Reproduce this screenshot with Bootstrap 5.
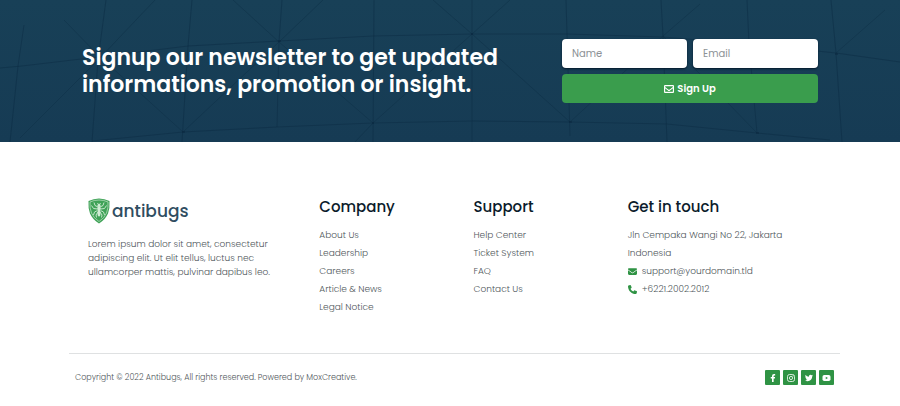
<!DOCTYPE html>
<html lang="en">
<head>
<meta charset="utf-8">
<meta name="viewport" content="width=device-width, initial-scale=1">
<title>Antibugs</title>
<link href="https://cdn.jsdelivr.net/npm/bootstrap@5.3.0/dist/css/bootstrap.min.css" rel="stylesheet">
<style>
  body { font-family: Poppins, Inter, "Open Sans", sans-serif; font-size: 9px; font-weight: 300; line-height: 14px; color: #4f575b; background: #fff; }
  .newsletter { background: linear-gradient(#184057, #163b54); padding: 39px 82px; }
  .web-lines { position: absolute; inset: 0; width: 100%; height: 100%; fill: none; stroke: #0c2c44; stroke-opacity: .5; }
  .signup-title { font-size: 22px; line-height: 27px; font-weight: 600; }
  .signup-form { flex: 0 0 256px; gap: 6px; }
  .signup-fields { gap: 6px; }
  .signup-form .form-control { height: 29px; padding: 0 10px; border: 0; border-radius: 4px; font-size: 10px; box-shadow: 0 1px 2px #04182a; }
  .signup-form .form-control::placeholder { color: #8d9296; }
  .btn-signup { height: 29px; padding: 0; border: 0; border-radius: 4px; font-size: 10px; font-weight: 600; gap: 3px; --bs-btn-color: #fff; --bs-btn-bg: #3a9d4d; --bs-btn-hover-color: #fff; --bs-btn-hover-bg: #2f8641; }
  .site-footer { padding: 56px 60px 0 69px; }
  .part-wide { flex: 0 0 30%; padding: 0 19px; }
  .part-slim { flex: 0 0 20%; padding: 0 0 0 19px; }
  .about-text { margin: 13px 0 0; }
  .footer-title { font-size: 15px; line-height: 18px; font-weight: 500; color: #0b1b2b; margin-bottom: 10px; }
  .line-list { line-height: 18px; }
  .line-list a, .brand { color: inherit; text-decoration: none; }
  .contact-link { gap: 5px; }
  .brand { gap: 2px; font-size: 17px; line-height: 26px; font-weight: 500; color: #2f4d61; }
  .green { fill: #2f9344; }
  .legal { margin-top: 37px; padding: 16px 6px; border-top: 1px solid #dfe1e2; font-size: 8px; line-height: 15px; }
  .social { gap: 3px; }
  .social a { width: 15px; height: 15px; border-radius: 1px; background: #2f9344; }
</style>
</head>
<body>
<section class="newsletter position-relative overflow-hidden text-white">
  <svg class="web-lines" viewBox="0 0 900 142" preserveAspectRatio="none" aria-hidden="true">
    <path d="M0 68 22 66 98 57 188 46 279 41 373 36 472 34 567 34 663 37 749 44 836 53 900 62M92 141 183 132 277 127 373 123 472 121 570 122 667 124 757 133 830 140"/>
    <path d="M24 25 18 66 10 142M106 0 98 60 92 142M192 0 188 46 182 142M282 0 279 42 277 127M374 0 373 142M472 0V142M566 0 567 34 570 136M661 0 663 36 667 142M747 0 749 44 757 133M831 0 836 53 842 142"/>
    <path stroke-opacity=".4" d="M20 138 98 60 155 0M64 20 98 55 183 132 279 42 323 0M233 0 279 42 373 123 472 34 510 0M355 142 373 123M433 0 472 34 570 122 663 36 700 4M663 36 757 133M836 53 885 10"/>
    <path stroke="#0a2740" stroke-width="2" d="M278 41h3M182 132h3M372 123h2M471 34h2M569 122h3M835 54h3M756 133h3"/>
  </svg>
  <div class="position-relative d-flex align-items-center justify-content-between">
    <h2 class="signup-title mb-0">Signup our newsletter to get updated<br>informations, promotion or insight.</h2>
    <form class="signup-form d-flex flex-column">
      <div class="d-flex signup-fields">
        <input class="form-control" type="text" placeholder="Name" aria-label="Name">
        <input class="form-control" type="email" placeholder="Email" aria-label="Email">
      </div>
      <button class="btn btn-signup d-flex align-items-center justify-content-center" type="submit">
        <svg width="10" height="10" viewBox="0 0 512 512" fill="none" stroke="currentColor" stroke-width="60" stroke-linejoin="round" aria-hidden="true"><rect x="30" y="80" width="452" height="352" rx="24"/><path d="M34 172 220 315Q256 340 292 315L478 172"/></svg>
        Sign Up
      </button>
    </form>
  </div>
</section>

<footer class="site-footer">
  <div class="d-flex">
    <div class="part-wide">
      <a class="brand d-flex align-items-center" href="#">
        <svg width="22" height="26" viewBox="0 0 44 52" aria-hidden="true">
          <path fill="#3fa257" d="M22 1Q33 1 43 6Q44 20 40 31Q35 43 22 51Q9 43 4 31Q0 20 1 6Q11 1 22 1Z"/>
          <path fill="none" stroke="#b9dfc0" stroke-width="1.5" d="M22 4Q32 4 40 8Q41 20 37 30Q33 40 22 47Q11 40 7 30Q3 20 4 8Q12 4 22 4Z"/>
          <g fill="none" stroke="#c4e5ca" stroke-width="2"><path d="M20 18 14 15 12 9M24 18 30 15 32 9M19 22 11 21 7 15M25 22 33 21 37 15M19 25 13 28 11 34M25 25 31 28 33 34M20 28 16 34 17 39M24 28 28 34 27 39M19 10 22 15 25 10"/></g>
          <g fill="#d2ecd6"><circle cx="22" cy="15" r="3"/><ellipse cx="22" cy="21" rx="3.500" ry="4"/><ellipse cx="22" cy="30" rx="3" ry="7"/></g>
        </svg>
        antibugs
      </a>
      <p class="about-text">Lorem ipsum dolor sit amet, consectetur adipiscing elit. Ut elit tellus, luctus nec ullamcorper mattis, pulvinar dapibus leo.</p>
    </div>
    <div class="part-slim">
      <h3 class="footer-title">Company</h3>
      <ul class="line-list list-unstyled mb-0">
        <li><a href="#">About Us</a></li>
        <li><a href="#">Leadership</a></li>
        <li><a href="#">Careers</a></li>
        <li><a href="#">Article &amp; News</a></li>
        <li><a href="#">Legal Notice</a></li>
      </ul>
    </div>
    <div class="part-slim">
      <h3 class="footer-title">Support</h3>
      <ul class="line-list list-unstyled mb-0">
        <li><a href="#">Help Center</a></li>
        <li><a href="#">Ticket System</a></li>
        <li><a href="#">FAQ</a></li>
        <li><a href="#">Contact Us</a></li>
      </ul>
    </div>
    <div class="part-wide">
      <h3 class="footer-title">Get in touch</h3>
      <ul class="line-list list-unstyled mb-0">
        <li>Jln Cempaka Wangi No 22, Jakarta<br>Indonesia</li>
        <li><a class="contact-link d-flex align-items-center" href="#"><svg class="green" width="9" height="9" viewBox="0 0 512 512" aria-hidden="true"><path d="M48 64h416q48 0 48 48 0 24-19 38L275 314q-19 14-38 0L19 150Q0 136 0 112 0 64 48 64ZM0 180l218 162q38 28 76 0l218-162v204q0 64-64 64H64q-64 0-64-64Z"/></svg>support@yourdomain.tld</a></li>
        <li><a class="contact-link d-flex align-items-center" href="#"><svg class="green" width="9" height="9" viewBox="0 0 512 512" aria-hidden="true"><path d="M165 25c-8-19-28-29-48-24L29 25C12 30 0 46 0 64c0 247 201 448 448 448 18 0 34-12 39-29l24-88c5-20-5-40-24-48l-96-40c-16-7-35-2-46 12l-40 49c-71-33-128-90-161-161l49-40c14-11 19-30 12-46Z"/></svg>+6221.2002.2012</a></li>
      </ul>
    </div>
  </div>
  <div class="legal d-flex align-items-center justify-content-between">
    <span>Copyright © 2022 Antibugs, All rights reserved. Powered by MoxCreative.</span>
    <div class="social d-flex">
      <a class="d-flex align-items-center justify-content-center" href="#" aria-label="Facebook"><svg width="8" height="8" viewBox="0 0 16 16" fill="#fff"><path d="M6 16V9H3.500V6H6V4Q6 0 10 0L12.300.2V2.800H11Q9.300 2.800 9.300 4.300V6H12.200L11.700 9H9.300V16Z"/></svg></a>
      <a class="d-flex align-items-center justify-content-center" href="#" aria-label="Instagram"><svg width="8" height="8" viewBox="0 0 16 16" fill="none" stroke="#fff" stroke-width="1.600"><rect x="1" y="1" width="14" height="14" rx="4"/><circle cx="8" cy="8" r="3.200"/><circle cx="12" cy="4" r=".4"/></svg></a>
      <a class="d-flex align-items-center justify-content-center" href="#" aria-label="Twitter"><svg width="8" height="8" viewBox="0 0 16 16" fill="#fff"><path d="M5 14.500c6 0 9.300-5 9.300-9.300v-.4A6.700 6.700 0 0 0 16 3a6.600 6.600 0 0 1-1.900.5A3.300 3.300 0 0 0 15.600 1.700a6.600 6.600 0 0 1-2.100.8A3.300 3.300 0 0 0 7.900 5.500 9.300 9.300 0 0 1 1.100 2.100a3.300 3.300 0 0 0 1 4.400A3.300 3.300 0 0 1 .6 6a3.300 3.300 0 0 0 2.600 3.300 3.300 3.300 0 0 1-1.500 0 3.300 3.300 0 0 0 3.100 2.300A6.600 6.600 0 0 1 0 13a9.300 9.300 0 0 0 5 1.500Z"/></svg></a>
      <a class="d-flex align-items-center justify-content-center" href="#" aria-label="YouTube"><svg width="9" height="8" viewBox="0 0 18 16"><rect x="1" y="2" width="16" height="12" rx="3.500" fill="#fff"/><path fill="#2f9344" d="M7.500 5.300 12 8 7.500 10.700Z"/></svg></a>
    </div>
  </div>
</footer>
<script src="https://cdn.jsdelivr.net/npm/bootstrap@5.3.0/dist/js/bootstrap.bundle.min.js"></script>
</body>
</html>
